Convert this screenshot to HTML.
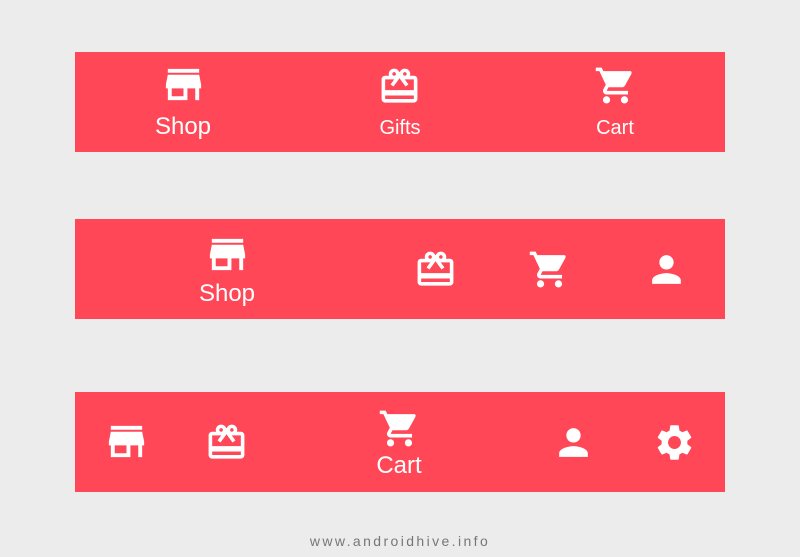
<!DOCTYPE html><html><head><style>
body{margin:0;width:800px;height:557px;background:#ececec;position:relative;font-family:"Liberation Sans",Roboto,sans-serif;overflow:hidden}
.bar{position:absolute;left:75px;width:650px;height:100px;background:#ff4757}
svg{position:absolute;width:43px;height:43px;fill:#fff}
svg.s{width:47px;height:47px}
.l{position:absolute;color:#fff;transform:translate(-50%,-50%);white-space:nowrap;line-height:1}
.foot{position:absolute;left:0;width:800px;top:533px;text-align:center;color:#777;font-size:14px;letter-spacing:2.4px}
</style></head><body>
<svg style="display:none"><defs>
<symbol id="st" viewBox="0 0 24 24"><path d="M20 4H4v2h16V4zm1 10v-2l-1-5H4l-1 5v2h1v6h10v-6h4v6h2v-6h1zm-9 4H6v-4h6v4z"/></symbol>
<symbol id="gf" viewBox="0 0 24 24"><path d="M20 6h-2.18c.11-.31.18-.65.18-1 0-1.66-1.34-3-3-3-1.05 0-1.960.54-2.5 1.35l-.5.67-.5-.68C10.96 2.54 10.05 2 9 2 7.34 2 6 3.34 6 5c0 .35.07.69.18 1H4c-1.11 0-1.99.89-1.990 2L2 19c0 1.11.89 2 2 2h16c1.11 0 2-.89 2-2V8c0-1.11-.89-2-2-2zm-5-2c.55 0 1 .45 1 1s-.45 1-1 1-1-.45-1-1 .45-1 1-1zM9 4c.55 0 1 .45 1 1s-.45 1-1 1-1-.45-1-1 .45-1 1-1zm11 15H4v-2h16v2zm0-5H4V8h5.08L7 10.83 8.620 12 11 8.76l1-1.36 1 1.36L15.38 12 17 10.83 14.92 8H20v6z"/></symbol>
<symbol id="ct" viewBox="0 0 24 24"><path d="M7 18c-1.1 0-1.99.9-1.99 2S5.9 22 7 22s2-.9 2-2-.9-2-2-2zM1 2v2h2l3.6 7.59-1.35 2.45c-.16.28-.25.61-.25.96 0 1.1.9 2 2 2h12v-2H7.42c-.14 0-.25-.11-.25-.25l.03-.12.9-1.63h7.45c.75 0 1.41-.41 1.750-1.03l3.58-6.49C21.25 4.44 20.76 4 20.2 4H5.21l-.94-2H1zm16 16c-1.1 0-1.99.9-1.99 2s.89 2 1.99 2 2-.9 2-2-.9-2-2-2z"/></symbol>
<symbol id="pr" viewBox="0 0 24 24"><path d="M12 12c2.21 0 4-1.79 4-4s-1.79-4-4-4-4 1.79-4 4 1.79 4 4 4zm0 2c-2.67 0-8 1.34-8 4v2h16v-2c0-2.66-5.33-4-8-4z"/></symbol>
<symbol id="se" viewBox="0 0 24 24"><path d="M19.14 12.94c.04-.3.06-.61.06-.94 0-.32-.02-.64-.07-.94l2.03-1.580c.18-.14.23-.41.12-.61l-1.92-3.32c-.12-.22-.37-.29-.59-.22l-2.39.96c-.5-.38-1.03-.7-1.62-.94l-.36-2.54c-.04-.24-.24-.41-.48-.41h-3.84c-.24 0-.43.17-.47.41l-.36 2.54c-.59.24-1.13.57-1.62.94l-2.39-.96c-.22-.08-.47 0-.59.22L2.74 8.87c-.12.21-.08.47.12.61l2.03 1.58c-.05.3-.09.63-.09.94s.02.64.07.94l-2.03 1.58c-.18.14-.23.41-.12.61l1.92 3.32c.12.22.37.29.59.22l2.39-.96c.5.38 1.03.7 1.62.94l.36 2.54c.05.24.24.41.48.41h3.84c.24 0 .44-.17.47-.41l.36-2.54c.59-.24 1.13-.56 1.62-.94l2.39.96c.22.08.47 0 .59-.22l1.92-3.32c.12-.22.07-.47-.12-.61l-2.01-1.58zM12 15.6c-1.98 0-3.6-1.62-3.6-3.6s1.62-3.6 3.6-3.6 3.6 1.62 3.6 3.6-1.62 3.6-3.6 3.6z"/></symbol>
</defs></svg>
<div class="bar" style="top:52px"></div>
<div class="bar" style="top:219px"></div>
<div class="bar" style="top:392px"></div>

<svg class="s" style="left:160px;top:61px"><use href="#st"/></svg>
<div class="l" style="left:183px;top:127px;font-size:24px">Shop</div>
<svg style="left:378px;top:65px"><use href="#gf"/></svg>
<div class="l" style="left:400px;top:128px;font-size:20px">Gifts</div>
<svg style="left:594px;top:64px"><use href="#ct"/></svg>
<div class="l" style="left:615px;top:128px;font-size:20px">Cart</div>

<svg class="s" style="left:204px;top:231px"><use href="#st"/></svg>
<div class="l" style="left:227px;top:294px;font-size:24px">Shop</div>
<svg style="left:414px;top:248px"><use href="#gf"/></svg>
<svg style="left:528px;top:248px"><use href="#ct"/></svg>
<svg style="left:645px;top:248px"><use href="#pr"/></svg>

<svg class="s" style="left:103px;top:418px"><use href="#st"/></svg>
<svg style="left:205px;top:421px"><use href="#gf"/></svg>
<svg style="left:378px;top:407px"><use href="#ct"/></svg>
<div class="l" style="left:399px;top:466px;font-size:24px">Cart</div>
<svg style="left:552px;top:421px"><use href="#pr"/></svg>
<svg style="left:653px;top:421px"><use href="#se"/></svg>

<div class="foot">www.androidhive.info</div>
</body></html>
